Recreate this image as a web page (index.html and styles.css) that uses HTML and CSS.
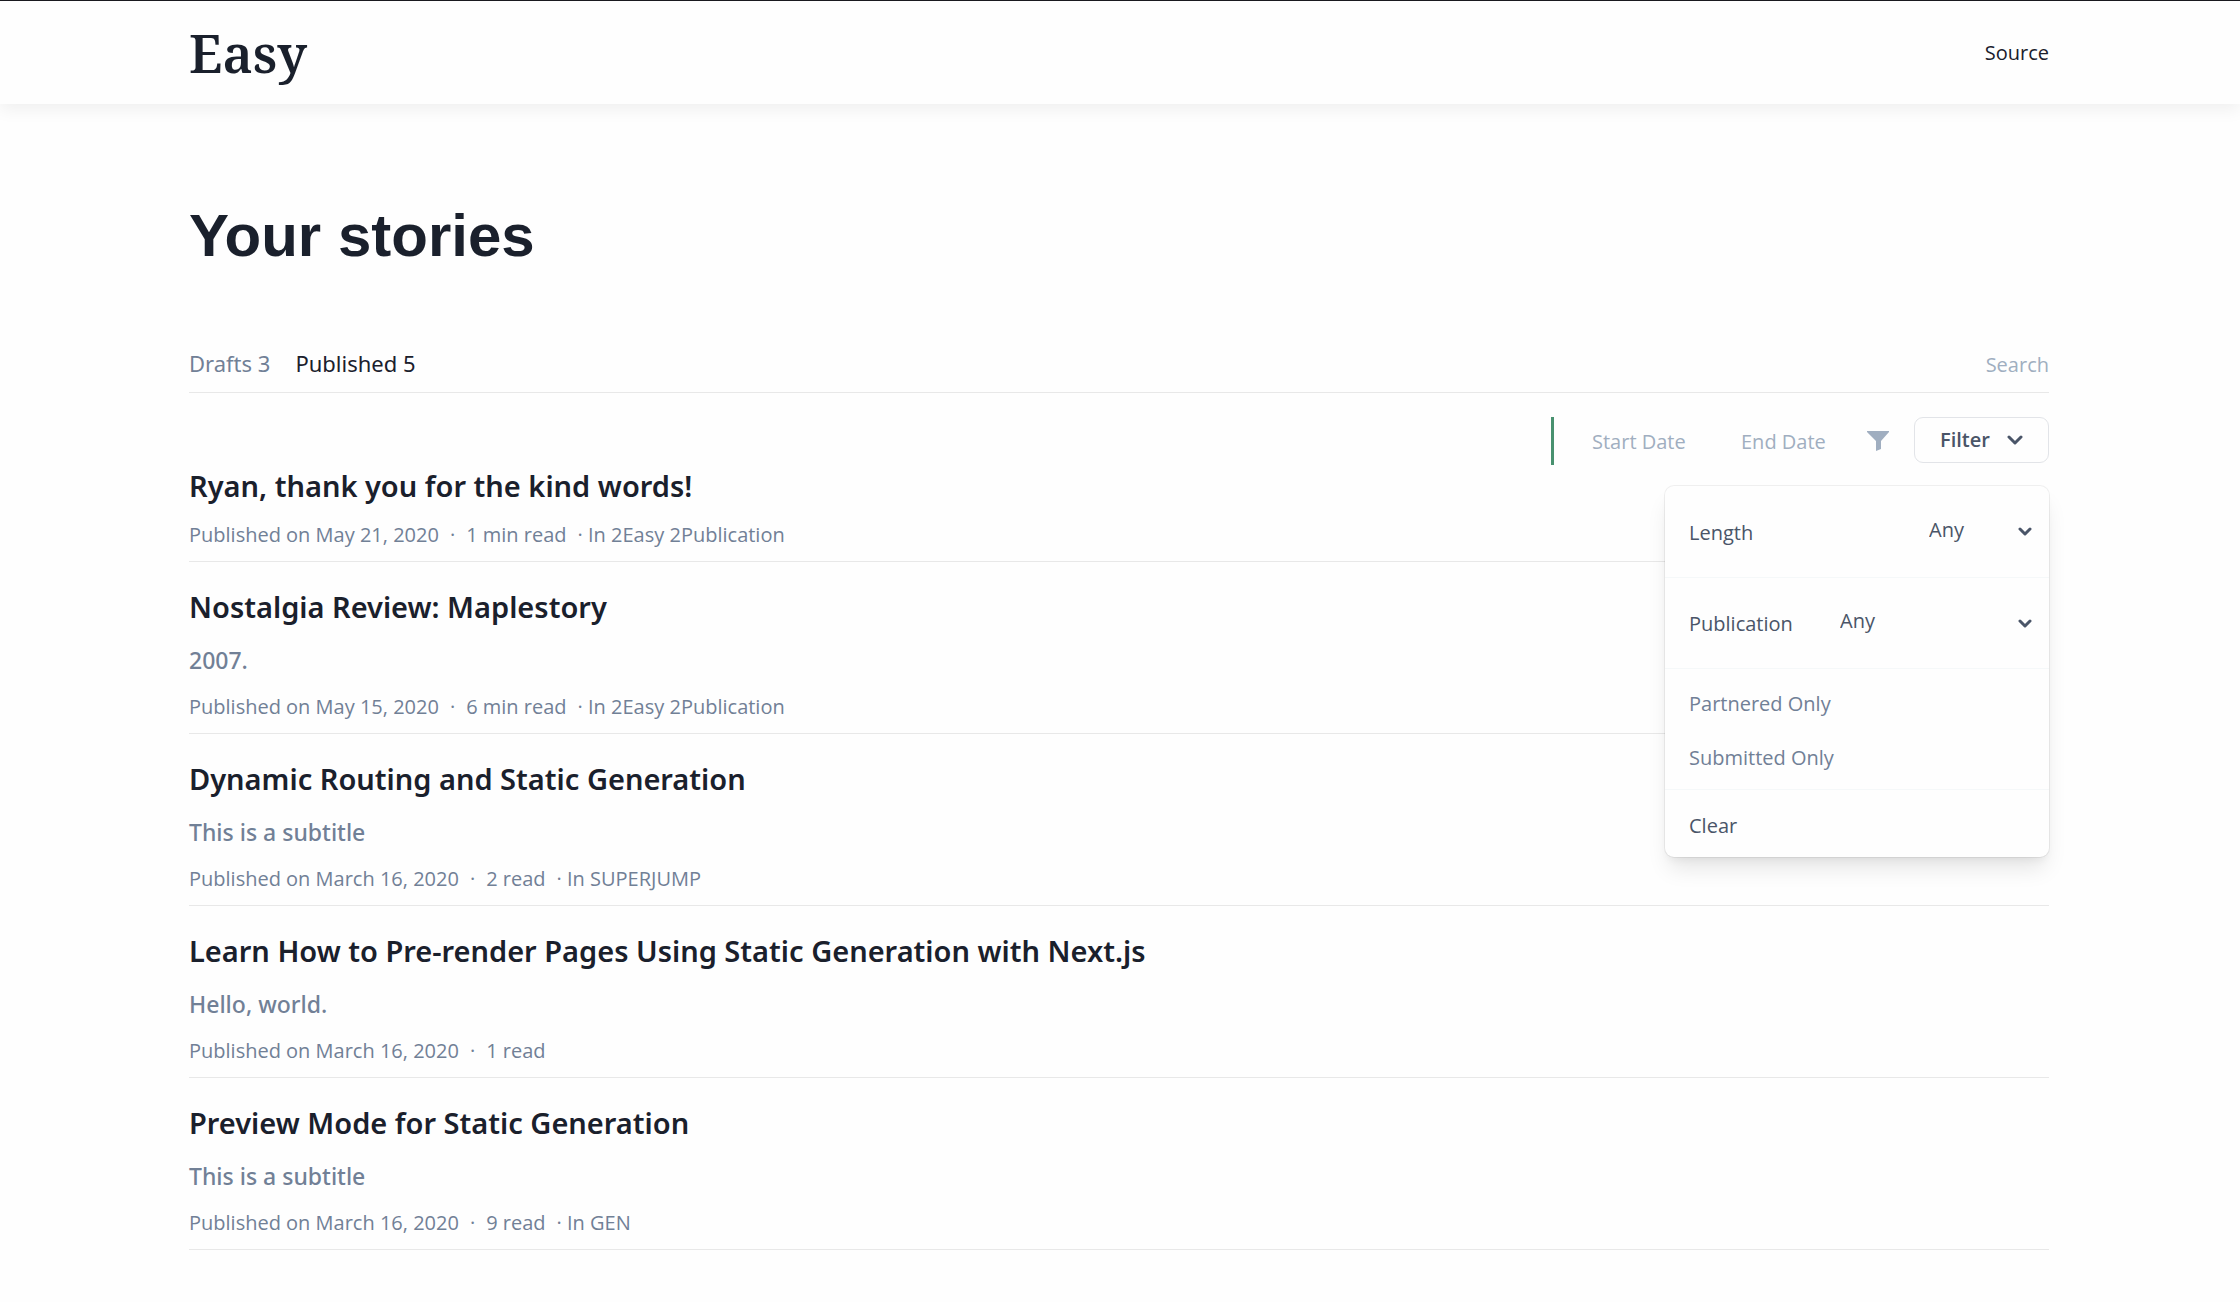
FILE: index.html
```html
<!DOCTYPE html>
<html lang="en">
<head>
<meta charset="utf-8">
<meta name="viewport" content="width=device-width, initial-scale=1">
<title>Easy – Your stories</title>
<link rel="stylesheet" href="styles.css">
</head>
<body>
<header class="site-header">
  <a class="logo" href="#">Easy</a>
  <nav><a class="nav-link" href="#">Source</a></nav>
</header>
<main class="page">
  <h1 class="page-title">Your stories</h1>
  <div class="tabs">
    <nav class="tab-list">
      <a class="tab" href="#">Drafts 3</a>
      <a class="tab tab-active" href="#">Published 5</a>
    </nav>
    <input class="field search" type="text" placeholder="Search" aria-label="Search">
  </div>
  <div class="toolbar">
    <div class="dates">
      <input class="field date-start" type="text" placeholder="Start Date" aria-label="Start date">
      <input class="field date-end" type="text" placeholder="End Date" aria-label="End date">
    </div>
    <svg class="funnel" viewBox="0 0 22 20" aria-hidden="true"><path d="M0 0h22v1l-8 9v8l-5 2V10L0 1z"/></svg>
    <button class="filter-button" type="button" aria-expanded="true">Filter
      <svg class="chevron chevron-large" viewBox="0 0 16 11" aria-hidden="true"><path d="M2 2l6 6 6-6"/></svg>
    </button>
    <div class="menu">
      <div class="menu-row menu-row-first">
        <label class="menu-label" for="length">Length</label>
        <div class="select-wrap select-short">
          <select class="select" id="length"><option>Any</option></select>
          <svg class="chevron" viewBox="0 0 14 9" aria-hidden="true"><path d="M2 2l5 5 5-5"/></svg>
        </div>
      </div>
      <div class="menu-row">
        <label class="menu-label" for="publication">Publication</label>
        <div class="select-wrap select-long">
          <select class="select" id="publication"><option>Any</option></select>
          <svg class="chevron" viewBox="0 0 14 9" aria-hidden="true"><path d="M2 2l5 5 5-5"/></svg>
        </div>
      </div>
      <div class="menu-group">
        <button class="menu-item" type="button">Partnered Only</button>
        <button class="menu-item" type="button">Submitted Only</button>
      </div>
      <button class="menu-clear" type="button">Clear</button>
    </div>
  </div>
  <div class="stories">
    <article class="story">
      <h2 class="story-title">Ryan, thank you for the kind words!</h2>
      <p class="story-meta"><span>Published on May 21, 2020</span><span>·</span><span>1 min read</span><span>· In 2Easy 2Publication</span></p>
    </article>
    <article class="story">
      <h2 class="story-title">Nostalgia Review: Maplestory</h2>
      <p class="story-subtitle">2007.</p>
      <p class="story-meta"><span>Published on May 15, 2020</span><span>·</span><span>6 min read</span><span>· In 2Easy 2Publication</span></p>
    </article>
    <article class="story">
      <h2 class="story-title">Dynamic Routing and Static Generation</h2>
      <p class="story-subtitle">This is a subtitle</p>
      <p class="story-meta"><span>Published on March 16, 2020</span><span>·</span><span>2 read</span><span>· In SUPERJUMP</span></p>
    </article>
    <article class="story">
      <h2 class="story-title">Learn How to Pre-render Pages Using Static Generation with Next.js</h2>
      <p class="story-subtitle">Hello, world.</p>
      <p class="story-meta"><span>Published on March 16, 2020</span><span>·</span><span>1 read</span></p>
    </article>
    <article class="story">
      <h2 class="story-title">Preview Mode for Static Generation</h2>
      <p class="story-subtitle">This is a subtitle</p>
      <p class="story-meta"><span>Published on March 16, 2020</span><span>·</span><span>9 read</span><span>· In GEN</span></p>
    </article>
  </div>
</main>
</body>
</html>
```
FILE: styles.css
```css
*, *::before, *::after { box-sizing: border-box; }

body {
  margin: 0;
  background: #fefefe;
  color: #1a202c;
  font: 400 20px/30px "Open Sans", "Noto Sans", sans-serif;
}

h1, h2, p { margin: 0; }
a { color: inherit; text-decoration: none; }
input, button, select {
  margin: 0;
  padding: 0;
  border: 0;
  background: none;
  color: inherit;
  font: inherit;
  line-height: 30px;
  appearance: none;
}

.site-header {
  display: flex;
  align-items: center;
  justify-content: space-between;
  min-height: 104px;
  padding: 0 191px 0 189px;
  border-top: 1px solid #1a1a1f;
  box-shadow: 0 6px 16px rgba(0, 0, 0, 0.06);
}
.logo { font: 650 52px/72px "Noto Serif", "Liberation Serif", serif; }

.page { padding: 96px 191px 48px 189px; }
.page-title {
  margin-bottom: 64px;
  font: 700 60px/72px "Liberation Sans", Arial, sans-serif;
}

.tabs {
  display: flex;
  align-items: center;
  justify-content: space-between;
  min-height: 57px;
  border-bottom: 1px solid #e8e8e8;
}
.tab-list {
  display: flex;
  gap: 25px;
  padding-bottom: 2px;
  font: 400 22px/30px "Noto Sans", "Open Sans", sans-serif;
}
.tab { color: #718096; }
.tab-active { color: #1a202c; }

.field { padding-top: 2px; color: #4a5568; }
.field::placeholder { color: #a0aec0; opacity: 1; }
.search { width: 240px; text-align: right; }

.toolbar {
  position: relative;
  display: flex;
  align-items: center;
  justify-content: flex-end;
  height: 48px;
  margin-top: 24px;
}
.dates {
  display: flex;
  align-items: center;
  height: 48px;
  padding-left: 18px;
  border-left: 3px solid #48916f;
}
.date-start, .date-end { padding: 2px 20px 0; }
.date-start { width: 149px; }
.date-end { width: 126px; }
.funnel { width: 22px; height: 20px; margin: 0 25px 0 20px; fill: #a0aec0; }
.filter-button {
  display: flex;
  align-items: center;
  align-self: flex-start;
  justify-content: space-between;
  width: 135px;
  height: 46px;
  padding: 0 25px;
  border: 1px solid #e2e4e8;
  border-radius: 9px;
  color: #4a5568;
  font-weight: 600;
}
.chevron {
  width: 14px;
  height: 9px;
  fill: none;
  stroke: #4a5568;
  stroke-width: 3;
  stroke-linecap: round;
  stroke-linejoin: round;
}
.chevron-large { width: 16px; height: 11px; }

.menu {
  position: absolute;
  top: 69px;
  right: 0;
  width: 384px;
  border-radius: 9px;
  background: #fefefe;
  box-shadow: 0 0 0 1px rgba(0, 0, 0, 0.06), 0 15px 22px -4px rgba(0, 0, 0, 0.1), 0 6px 9px -3px rgba(0, 0, 0, 0.05);
  color: #4a5568;
}
.menu-row {
  display: flex;
  align-items: center;
  justify-content: space-between;
  min-height: 91px;
  padding: 0 17px 0 24px;
  border-bottom: 1px solid #f5f8f9;
}
.menu-row-first { min-height: 92px; }
.menu-label { padding-top: 2px; }
.select-wrap { display: grid; align-items: center; }
.select-short { width: 103px; }
.select-long { width: 192px; }
.select { grid-area: 1 / 1; width: 100%; height: 48px; padding-bottom: 4px; }
.select-wrap .chevron { grid-area: 1 / 1; justify-self: end; pointer-events: none; }
.menu-group {
  display: flex;
  flex-direction: column;
  padding: 6px 0;
  border-bottom: 1px solid #f5f8f9;
}
.menu-item, .menu-clear { padding: 4px 24px 0; text-align: left; }
.menu-item { height: 54px; color: #718096; }
.menu-clear { width: 100%; height: 67px; }

.story {
  display: flex;
  flex-direction: column;
  gap: 13px;
  padding: 24px 0 11px;
  border-bottom: 1px solid #e8e8e8;
}
.story:first-child { padding-top: 0; }
.story-title { font: 650 29px/42px "Noto Sans", "Open Sans", sans-serif; }
.story-subtitle {
  color: #718096;
  font: 500 23px/38px "Noto Sans", "Open Sans", sans-serif;
}
.story-meta { display: flex; gap: 11px; color: #718096; }
```
